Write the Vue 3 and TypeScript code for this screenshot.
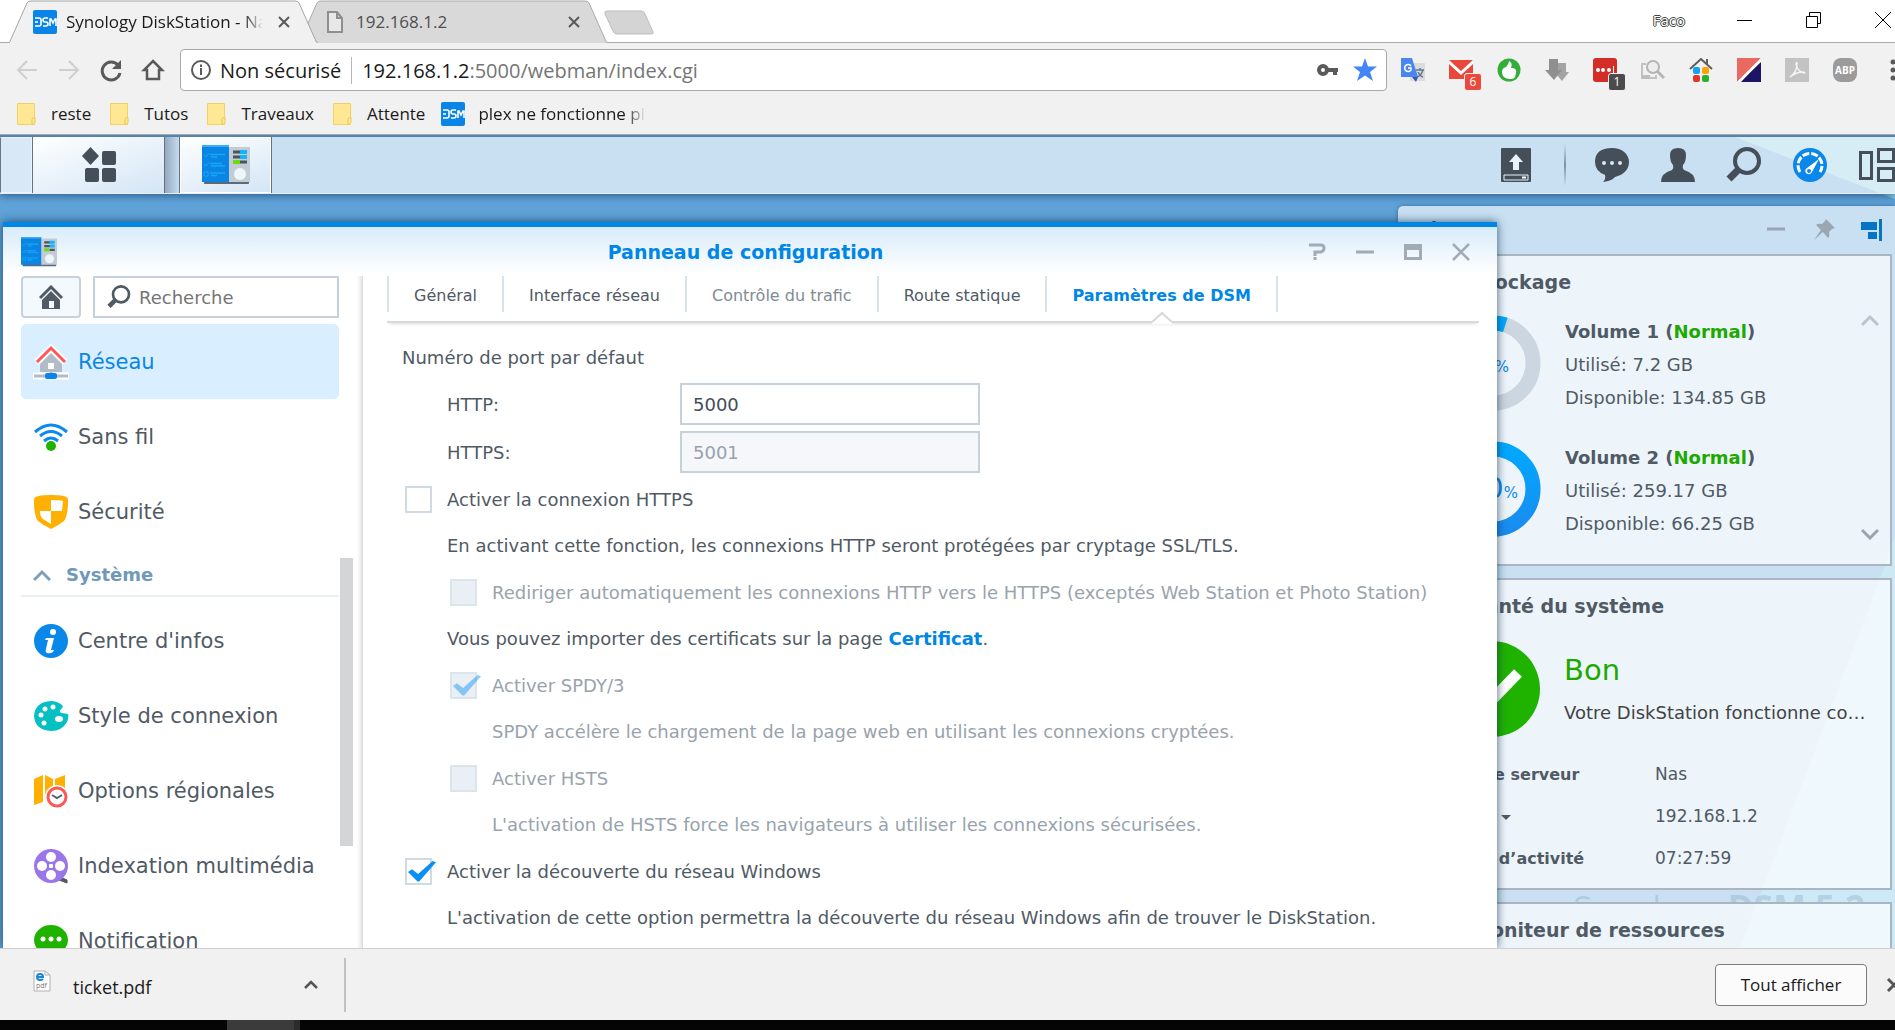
<script setup lang="ts">
import { ref } from 'vue'

interface Volume {
  name: string
  used: string
  free: string
  percent: number
}

const bookmarks = ['reste', 'Tutos', 'Traveaux', 'Attente']
const tabs = [
  { label: 'Général', state: '' },
  { label: 'Interface réseau', state: '' },
  { label: 'Contrôle du trafic', state: 'dim' },
  { label: 'Route statique', state: '' },
  { label: 'Paramètres de DSM', state: 'active' },
]
const volumes: Volume[] = [
  { name: 'Volume 1', used: '7.2 GB', free: '134.85 GB', percent: 5 },
  { name: 'Volume 2', used: '259.17 GB', free: '66.25 GB', percent: 80 },
]
const facts = [
  { label: 'Nom de serveur', value: 'Nas', menu: false },
  { label: 'LAN 1', value: '192.168.1.2', menu: true },
  { label: 'Temps d’activité', value: '07:27:59', menu: false },
]
const networkItems = [
  { id: 'reseau', label: 'Réseau' },
  { id: 'wifi', label: 'Sans fil' },
  { id: 'shield', label: 'Sécurité' },
]
const systemItems = [
  { id: 'info', label: "Centre d'infos" },
  { id: 'palette', label: 'Style de connexion' },
  { id: 'region', label: 'Options régionales' },
  { id: 'media', label: 'Indexation multimédia' },
  { id: 'notif', label: 'Notification' },
]
const httpPort = ref('5000')
const httpsPort = ref('5001')
const address = ref('192.168.1.2:5000/webman/index.cgi')
const enableHttps = ref(false)
const redirect = ref(false)
const spdy = ref(true)
const hsts = ref(false)
const discovery = ref(true)
const ringLength = 2 * Math.PI * 40
</script>

<template>
  <div class="screen">
    <svg class="defs" aria-hidden="true">
      <symbol id="i-panel" viewBox="0 0 48 40">
        <rect x="2" y="36" width="45" height="3" rx="1" fill="#5d6b78" />
        <rect x="26" y="2" width="22" height="35" fill="#c3ccd3" />
        <rect x="0" y="0" width="27" height="37" fill="#0a85e4" />
        <rect x="0" y="0" width="27" height="2" fill="#37aef8" />
        <path d="M2 10l2 2 3-4M2 19l2 2 3-4M2 27h4v4h-4z" fill="none" stroke="#14a8f5" />
        <path d="M8 9.500h15M9 12h6M8 18.500h12M9 21h14M8 28h15M9 30.500h6" stroke="#14a8f5" stroke-width="1.500" />
        <path d="M31 7h8M31 12h8M38 17h7" stroke="#4a5560" stroke-width="3" />
        <path d="M38 7h7M38 12h7" stroke="#12b5f9" stroke-width="4" />
        <path d="M31 17h7" stroke="#6edb12" stroke-width="4" />
        <ellipse cx="38" cy="29" rx="6" ry="6" fill="#edf6fb" />
      </symbol>
      <symbol id="i-dsm" viewBox="0 0 24 24">
        <rect width="24" height="24" rx="2" fill="#0a84e8" />
        <path d="M2 8h4q2 0 2 2v4q0 2-2 2h-4M2 12h3M15 8h-3q-2 0-2 2t2 2h1q2 0 2 2t-2 2h-3M17 16v-7h1l2 4 2-4h1v7" fill="none" stroke="#fff" stroke-width="1.600" />
      </symbol>
      <symbol id="i-folder" viewBox="0 0 24 24">
        <path d="M3.500 1.500h17v21h-17z" fill="#ffe793" stroke="#f2d261" />
        <path d="M18 22.500v-5q0-2 3-2v5q0 2-3 2z" fill="#ffe793" stroke="#ecc94f" />
      </symbol>
      <symbol id="i-reseau" viewBox="0 0 36 36">
        <path d="M18 8l11 10v10H7V18z" fill="#b2bcc7" />
        <rect x="15" y="19" width="6" height="6" fill="#fff" />
        <path d="M4 18L18 4l14 14" fill="none" stroke="#fff" stroke-width="7" />
        <path d="M4 18L18 4l14 14" fill="none" stroke="#ff5757" stroke-width="3" />
        <path d="M0 32h36" stroke="#fff" stroke-width="7" />
        <path d="M18 27v4M1 32h34" stroke="#b2bcc7" stroke-width="3" />
        <rect x="12" y="29" width="12" height="6" rx="2" fill="#0a84e8" />
      </symbol>
      <symbol id="i-wifi" viewBox="0 0 36 36">
        <path d="M2 13q16-14 32 0M7 17q11-9 22 0M11 22q7-6 14 0" fill="none" stroke="#0a8aee" stroke-width="3" />
        <circle cx="18" cy="27" r="5" fill="#1fb300" />
      </symbol>
      <symbol id="i-shield" viewBox="0 0 36 36">
        <path d="M1 5q1-4 17-4t17 4v6q-1 13-4 16-5 4-13 8-8-4-13-8-3-3-4-16z" fill="#ffb000" />
        <path d="M18 6q9 0 12 1l-1 10H18zM18 17H7q0 6 3 8l8 5z" fill="#fff" />
      </symbol>
      <symbol id="i-info" viewBox="0 0 36 36">
        <circle cx="18" cy="18" r="17" fill="#0a88ea" />
        <circle cx="20" cy="9" r="3" fill="#fff" />
        <path d="M13 15h8l-3 12h3l-1 2q-3 2-6 1-2-1-1-4l2-9h-3z" fill="#fff" />
      </symbol>
      <symbol id="i-palette" viewBox="0 0 36 36">
        <path d="M18 3q6 0 11 4 2 2-1 4-3 3 1 4l6 1q1 3-1 8-5 9-16 9Q2 32 1 18 2 4 18 3z" fill="#05c0c2" />
        <g fill="#fff"><circle cx="20" cy="9" r="2.500" /><circle cx="12" cy="11" r="2.500" /><circle cx="8" cy="17" r="2.500" /><circle cx="11" cy="25" r="2.500" /><ellipse cx="26" cy="21" rx="4" ry="3" /></g>
      </symbol>
      <symbol id="i-region" viewBox="0 0 36 36">
        <path d="M1 6l9-4v27l-9 3zM12 2l8 4v22l-8-3zM22 6l10-4v20l-10 3z" fill="#ffb000" />
        <circle cx="24" cy="24" r="12" fill="#fff" />
        <circle cx="24" cy="24" r="9" fill="#fff" stroke="#ff5757" stroke-width="3" />
        <path d="M19 22l5 3 5-3" fill="none" stroke="#56616c" stroke-width="2" />
      </symbol>
      <symbol id="i-media" viewBox="0 0 36 36">
        <path d="M25 28l9 4v3l-8-3z" fill="#505b66" stroke="#505b66" />
        <circle cx="18" cy="18" r="17" fill="#9b76ea" />
        <g fill="#fff"><circle cx="18" cy="9" r="5" /><circle cx="18" cy="27" r="5" /><circle cx="9" cy="18" r="5" /><circle cx="27" cy="18" r="5" /><rect x="16" y="16" width="4" height="4" rx="1" /></g>
      </symbol>
      <symbol id="i-notif" viewBox="0 0 36 36">
        <ellipse cx="18" cy="17" rx="17" ry="15" fill="#1fb300" />
        <path d="M12 28l-2 8 12-6z" fill="#1fb300" />
        <g fill="#fff"><circle cx="10" cy="16" r="2.500" /><circle cx="18" cy="16" r="2.500" /><circle cx="26" cy="16" r="2.500" /></g>
      </symbol>
      <symbol id="i-search" viewBox="0 0 36 36">
        <circle cx="21" cy="14" r="12" fill="none" stroke="currentColor" stroke-width="4" />
        <path d="M12 23l-9 9" stroke="currentColor" stroke-width="7" />
      </symbol>
      <symbol id="i-x" viewBox="0 0 18 18">
        <path d="M4 4l10 10M14 4L4 14" fill="none" stroke="currentColor" stroke-width="2" />
      </symbol>
    </svg>

    <header class="browser">
      <div class="strip">
        <div class="tab tab-on">
          <svg class="tab-shape" viewBox="0 0 310 43" preserveAspectRatio="none"><path d="M0 43Q2 43 3 39L19 3Q20 1 23 1H287Q290 1 291 3L307 39Q308 43 310 43" fill="#f1f1f1" stroke="#a5a5a5" /></svg>
          <svg class="s24"><use href="#i-dsm" /></svg>
          <span class="tab-title fade">Synology DiskStation - Nas</span>
          <button class="plain tab-x" aria-label="Fermer l'onglet"><svg class="s18"><use href="#i-x" /></svg></button>
        </div>
        <div class="tab tab-off">
          <svg class="tab-shape" viewBox="0 0 310 43" preserveAspectRatio="none"><path d="M0 43Q2 43 3 39L19 3Q20 1 23 1H287Q290 1 291 3L307 39Q308 43 310 43" fill="#d9d9d9" stroke="#ababab" /></svg>
          <svg class="s24" viewBox="0 0 24 24"><path d="M5 2h9l5 6v14H5zM14 2v6h5" fill="#e8e8e8" stroke="#8f8f8f" stroke-width="2" /></svg>
          <span class="tab-title">192.168.1.2</span>
          <button class="plain tab-x" aria-label="Fermer l'onglet"><svg class="s18"><use href="#i-x" /></svg></button>
        </div>
        <button class="plain newtab" aria-label="Nouvel onglet"><svg width="52" height="26" viewBox="0 0 52 26"><path d="M4 1h34q3 0 4 3l8 18q1 2-2 2H14q-3 0-4-3L2 4q-1-3 2-3z" fill="#d4d4d4" stroke="#bdbdbd" /></svg></button>
        <div class="win-ctl">
          <span class="user">Faco</span>
          <button class="plain" aria-label="Réduire"><svg class="s18" viewBox="0 0 18 18"><path d="M1 9.500h15" stroke="#000" /></svg></button>
          <button class="plain" aria-label="Restaurer"><svg class="s18" viewBox="0 0 18 18"><path d="M1.500 5.500h11v11h-11zM4.500 5.500v-4h11v11h-3" fill="none" stroke="#000" /></svg></button>
          <button class="plain" aria-label="Fermer"><svg class="s18" viewBox="0 0 18 18"><path d="M1 1l16 16M17 1L1 17" stroke="#000" /></svg></button>
        </div>
      </div>

      <div class="toolbar">
        <nav class="nav">
          <button class="plain" aria-label="Précédent"><svg class="s24" viewBox="0 0 24 24"><path d="M22 12H4M12 3l-9 9 9 9" fill="none" stroke="#cfcfcf" stroke-width="2" /></svg></button>
          <button class="plain" aria-label="Suivant"><svg class="s24" viewBox="0 0 24 24"><path d="M2 12h18M12 3l9 9-9 9" fill="none" stroke="#cfcfcf" stroke-width="2" /></svg></button>
          <button class="plain" aria-label="Actualiser"><svg class="s24" viewBox="0 0 24 24"><path d="M19 7a9 9 0 1 0 2 8" fill="none" stroke="#5a5a5a" stroke-width="3" /><path d="M22 2v9h-9z" fill="#5a5a5a" /></svg></button>
          <button class="plain" aria-label="Accueil"><svg class="s24" viewBox="0 0 24 24"><path d="M12 3l9 9h-3v9H6v-9H3z" fill="none" stroke="#5a5a5a" stroke-width="2.500" /></svg></button>
        </nav>
        <div class="omnibox">
          <svg class="s22" viewBox="0 0 22 22"><circle cx="11" cy="11" r="9" fill="none" stroke="#5a5a5a" stroke-width="2" /><path d="M11 9v7M11 5.500v2.500" stroke="#5a5a5a" stroke-width="2" /></svg>
          <span class="unsafe">Non sécurisé</span>
          <label class="url">
            <span aria-hidden="true"><b>192.168.1.2</b>:5000/webman/index.cgi</span>
            <input v-model="address" class="url-input" aria-label="Adresse" />
          </label>
          <svg class="s24" viewBox="0 0 24 24"><path d="M12 10h10v4h-1v3h-4v-3h-5z" fill="#5a5a5a" /><circle cx="7" cy="12" r="4" fill="none" stroke="#5a5a5a" stroke-width="4" /></svg>
          <svg class="s24" viewBox="0 0 24 24"><path d="M12 0l3 8.500h9l-7 5.500 3 9-8-5.500L4 23l3-9-7-5.500h9z" fill="#4285f4" /></svg>
        </div>
        <div class="exts">
          <button class="plain" aria-label="Traduction"><svg class="s24" viewBox="0 0 24 24"><rect x="9" y="5" width="15" height="18" rx="1" fill="#dcdcdc" /><path d="M11 19h6l-2 5z" fill="#3458b8" /><path d="M0 0h11l6 19H0z" fill="#4a86f0" /><path d="M10 8a3.500 3.500 0 1 0 0 4V10H7" fill="none" stroke="#fff" stroke-width="1.500" /><path d="M15 12h8M19 10v2M22 12q-2 6-6 7M17 14q2 4 5 5" fill="none" stroke="#61788f" stroke-width="1.500" /></svg></button>
          <button class="plain" aria-label="Courrier"><svg class="s24" viewBox="0 0 24 24"><path d="M0 2h24v19H0z" fill="#e8483b" /><path d="M0 2l12 11L24 2v4L12 17 0 6z" fill="#fff" /><path d="M3 2h18l-9 8z" fill="#e8483b" /></svg><span class="badge red">6</span></button>
          <button class="plain" aria-label="Avis"><svg class="s24" viewBox="0 0 24 24"><circle cx="12" cy="12" r="11.500" fill="#35ad3a" /><path d="M12 3q4 2 2 7h2q4 1 3 5l-1 4q-1 2-5 2-8 0-8-7 0-4 4-5 3-3 3-6z" fill="#fff" /></svg></button>
          <button class="plain" aria-label="Téléchargement"><svg class="s24" viewBox="0 0 24 24"><path d="M12 5h9v9h3l-7 9-6-7z" fill="#a3a3a3" /><path d="M4 1h9v11h4l-8 10-9-10h4z" fill="#8f8f8f" /></svg></button>
          <button class="plain" aria-label="Mots de passe"><svg class="s24" viewBox="0 0 24 24"><rect width="24" height="24" rx="3" fill="#d32d27" /><circle cx="5" cy="12" r="2" fill="#fff" /><circle cx="10" cy="12" r="2" fill="#fff" /><circle cx="16" cy="12" r="2" fill="#fff" /><path d="M20.500 8v8" stroke="#fff" /></svg><span class="badge dark">1</span></button>
          <button class="plain" aria-label="Recherche image"><svg class="s24" viewBox="0 0 24 24"><path d="M5 6H1v14h14v-3" fill="none" stroke="#c2c2c2" stroke-width="2" /><path d="M1 17h8v4H1z" fill="#bdbdbd" /><circle cx="12" cy="9" r="6" fill="#eee" stroke="#b5b5b5" stroke-width="2" /><path d="M16 13l7 7" stroke="#b5b5b5" stroke-width="3" /></svg></button>
          <button class="plain" aria-label="Maison"><svg class="s24" viewBox="0 0 24 24"><path d="M1 11L12 1l11 10M18 1v6" fill="none" stroke="#5e5e5e" stroke-width="2" /><rect x="4" y="9" width="7" height="7" rx="2" fill="#12a4f0" /><rect x="13" y="9" width="7" height="7" rx="2" fill="#ffa200" /><rect x="4" y="17" width="7" height="7" rx="2" fill="#e43529" /><rect x="13" y="17" width="7" height="7" rx="2" fill="#28b22d" /></svg></button>
          <button class="plain" aria-label="Extension"><svg class="s24" viewBox="0 0 24 24"><path d="M0 0h24L0 24z" fill="#e86a61" /><path d="M24 3v21H4z" fill="#1c1564" /><path d="M24 0v4L3 24H0z" fill="#fff" /></svg></button>
          <button class="plain" aria-label="PDF"><svg class="s24" viewBox="0 0 24 24"><rect width="24" height="24" fill="#c3c3c3" /><path d="M5 19q7-5 7-13 0-3-1 0 1 7 8 9 2 0-1-1-7 0-13 5" fill="none" stroke="#f5f5f5" stroke-width="1.500" /></svg></button>
          <button class="plain abp" aria-label="Bloqueur de publicité">ABP</button>
          <button class="plain" aria-label="Menu"><svg class="s24" viewBox="0 0 24 24"><g fill="#5a5a5a"><circle cx="12" cy="4" r="2.500" /><circle cx="12" cy="12" r="2.500" /><circle cx="12" cy="20" r="2.500" /></g></svg></button>
        </div>
      </div>

      <nav class="bookmarks">
        <a v-for="b in bookmarks" :key="b" href="#"><svg class="s24"><use href="#i-folder" /></svg>{{ b }}</a>
        <a href="#"><svg class="s24"><use href="#i-dsm" /></svg><span class="fade bm-long">plex ne fonctionne plus</span></a>
      </nav>
    </header>

    <main class="desktop">
      <svg class="wall" viewBox="0 0 1895 812" preserveAspectRatio="none" aria-hidden="true">
        <path d="M1730 0H1895V64z" fill="#aff0ee" fill-opacity=".5" />
        <path d="M1885 430L1895 400V812H1740z" fill="#7fe0f0" fill-opacity=".45" />
      </svg>

      <div class="taskbar">
        <div class="tb-edge"></div>
        <button class="tb-menu" aria-label="Menu principal"><svg width="36" height="36" viewBox="0 0 36 36"><g fill="#454f5a"><path d="M9.500 0l8.500 9-8.500 9L1 9z" /><rect x="21" y="4" width="14" height="14" rx="2" /><rect x="4" y="21" width="14" height="14" rx="2" /><rect x="21" y="21" width="14" height="14" rx="2" /></g></svg></button>
        <div class="tb-gap"></div>
        <button class="tb-app" aria-label="Panneau de configuration"><svg width="48" height="40"><use href="#i-panel" /></svg></button>
        <div class="tray">
          <button class="plain" aria-label="Envoi"><svg class="s36" viewBox="0 0 36 36"><rect x="3" y="1" width="30" height="34" rx="1" fill="#454f5a" /><path d="M18 7l7 8h-4v8h-6v-8h-4z" fill="#e9f2fa" /><path d="M6 28h24v5H6z" fill="none" stroke="#e9f2fa" /><path d="M24 30.500h4" stroke="#fff" stroke-width="2" /></svg></button>
          <span class="tray-sep"></span>
          <button class="plain" aria-label="Notifications"><svg class="s36" viewBox="0 0 36 36"><path d="M18 1c10 0 17 6 17 14S29 28 21 30q-3 4-12 5 3-3 2-7Q1 24 1 15 1 1 18 1z" fill="#454f5a" /><g fill="#dbe8f4"><circle cx="10" cy="16" r="2" /><circle cx="18" cy="16" r="2" /><circle cx="26" cy="16" r="2" /></g></svg></button>
          <button class="plain" aria-label="Utilisateur"><svg class="s36" viewBox="0 0 36 36"><path d="M18 1q8 0 8 7 0 7-3 10-1 3 1 5 11 3 11 12H1q0-9 11-12 2-2 1-5-3-3-3-10 0-7 8-7z" fill="#454f5a" /></svg></button>
          <button class="plain" aria-label="Rechercher"><svg class="s36"><use href="#i-search" /></svg></button>
          <button class="plain" aria-label="Widgets"><svg class="s36" viewBox="0 0 36 36"><circle cx="18" cy="18" r="17" fill="#0a88ea" /><path d="M8 25a12 12 0 1 1 20 0" fill="none" stroke="#fff" stroke-width="3" stroke-dasharray="7 2" /><path d="M27 12l-7 13q-2 4-6 1-2-3 1-5z" fill="#fff" /><circle cx="17" cy="24" r="2" fill="#0a88ea" /></svg></button>
          <button class="plain" aria-label="Vue d'ensemble"><svg width="37" height="36" viewBox="0 0 37 36"><g fill="none" stroke="#454f5a" stroke-width="3"><path d="M2.500 5.500h11v26h-11zM20.500 2.500h15v12h-15zM20.500 21.500h15v12h-15z" /></g></svg></button>
        </div>
      </div>

      <aside class="widgets">
        <div class="wd-head">
          <button class="plain wd-plus" aria-label="Ajouter"><svg class="s24" viewBox="0 0 24 24"><path d="M12 3v18M3 12h18" stroke="#454f5a" stroke-width="3" /></svg></button>
          <button class="plain" aria-label="Réduire"><svg class="s24" viewBox="0 0 24 24"><path d="M3 11h18" stroke="#9aa7b3" stroke-width="3" /></svg></button>
          <button class="plain" aria-label="Épingler"><svg class="s24" viewBox="0 0 24 24"><path d="M14 1l9 9-3 1-3 3q1 4-1 6l-5-6-9 8 7-10-5-5q2-2 6-1l3-3z" fill="#9aa7b3" /></svg></button>
          <button class="plain" aria-label="Ancrer"><svg class="s24" viewBox="0 0 24 24"><path d="M1 4h16v8H1zM8 14h9v7H8zM19 1h3v22h-3z" fill="#0673c4" /></svg></button>
        </div>
        <div class="brand" aria-hidden="true">Synology <b>DSM 5.2</b></div>
        <section class="card">
          <h2>Stockage</h2>
          <div class="storage">
            <div class="vols">
              <div v-for="v in volumes" :key="v.name" class="vol">
                <div class="ring">
                  <svg width="96" height="96" viewBox="0 0 96 96">
                    <defs><linearGradient id="ringfill" x1="1" y1="0" x2="0" y2="0"><stop offset="0" stop-color="#00a8ff" /><stop offset="1" stop-color="#1a8cf0" /></linearGradient></defs>
                    <circle cx="48" cy="48" r="40" fill="none" stroke="#ccd6e0" stroke-width="15" />
                    <circle cx="48" cy="48" r="40" fill="none" :stroke="v.percent < 10 ? '#00a8ff' : 'url(#ringfill)'" stroke-width="15" transform="rotate(-90 48 48)" :stroke-dasharray="`${(ringLength * v.percent) / 100} ${ringLength}`" />
                  </svg>
                  <span class="pct">{{ v.percent }}<small>%</small></span>
                </div>
                <div class="lines">
                  <strong>{{ v.name }} (<em>Normal</em>)</strong>
                  <span>Utilisé: {{ v.used }}</span>
                  <span>Disponible: {{ v.free }}</span>
                </div>
              </div>
            </div>
            <div class="arrows">
              <button class="plain" aria-label="Précédent"><svg width="18" height="12" viewBox="0 0 18 12"><path d="M1 10l8-8 8 8" fill="none" stroke="#bcc5cd" stroke-width="3" /></svg></button>
              <button class="plain" aria-label="Suivant"><svg width="18" height="12" viewBox="0 0 18 12"><path d="M1 2l8 8 8-8" fill="none" stroke="#9aa5af" stroke-width="3" /></svg></button>
            </div>
          </div>
        </section>
        <section class="card">
          <h2>Santé du système</h2>
          <div class="health">
            <svg width="96" height="96" viewBox="0 0 96 96"><circle cx="48" cy="48" r="48" fill="#1fb300" /><path d="M22 48l19 18 33-34" fill="none" stroke="#fff" stroke-width="11" /></svg>
            <div class="lines">
              <span class="good">Bon</span>
              <span class="works">Votre DiskStation fonctionne correctement.</span>
            </div>
          </div>
          <table class="facts">
            <tbody>
              <tr v-for="f in facts" :key="f.label">
                <th scope="row">{{ f.label }}<svg v-if="f.menu" class="caret" width="10" height="5" viewBox="0 0 10 5"><path d="M0 0h10L5 5z" fill="#505a65" /></svg></th>
                <td>{{ f.value }}</td>
              </tr>
            </tbody>
          </table>
        </section>
        <section class="card last">
          <h2>Moniteur de ressources</h2>
        </section>
      </aside>

      <section class="window">
        <header class="titlebar">
          <svg width="36" height="30"><use href="#i-panel" /></svg>
          <h1>Panneau de configuration</h1>
          <div class="w-ctl">
            <button class="plain" aria-label="Aide"><svg class="s18" viewBox="0 0 18 18"><path d="M1 2h12q3 0 3 3t-3 4H7v4M7 14v3" fill="none" stroke="#a0abb5" stroke-width="3" /></svg></button>
            <button class="plain" aria-label="Réduire"><svg class="s18" viewBox="0 0 18 18"><path d="M0 9h18" stroke="#a0abb5" stroke-width="3" /></svg></button>
            <button class="plain" aria-label="Agrandir"><svg class="s18" viewBox="0 0 18 18"><path d="M0 1h18v16H0zM3 7v7h12V7z" fill="#a0abb5" fill-rule="evenodd" /></svg></button>
            <button class="plain" aria-label="Fermer"><svg class="s18" viewBox="0 0 18 18"><path d="M1 1l16 16M17 1L1 17" stroke="#a0abb5" stroke-width="2.500" /></svg></button>
          </div>
        </header>

        <div class="w-body">
          <aside class="side">
            <div class="side-top">
              <button class="home" aria-label="Accueil"><svg class="s24" viewBox="0 0 24 24"><path d="M1 13L12 2l11 11" fill="none" stroke="#505b66" stroke-width="3" /><path d="M12 6l9 9v9H3v-9zM10 16v7h5v-7z" fill="#505b66" fill-rule="evenodd" /></svg></button>
              <label class="search"><svg class="s24"><use href="#i-search" /></svg><input type="text" placeholder="Recherche" aria-label="Recherche" /></label>
            </div>
            <div class="side-list">
              <nav class="items">
                <a v-for="(it, i) in networkItems" :key="it.id" href="#" class="item" :class="{ on: i === 0 }"><svg class="s36"><use :href="'#i-' + it.id" /></svg>{{ it.label }}</a>
                <button class="group"><svg width="18" height="12" viewBox="0 0 18 12"><path d="M1 11l8-8 8 8" fill="none" stroke="#7e9fba" stroke-width="3" /></svg>Système</button>
                <a v-for="it in systemItems" :key="it.id" href="#" class="item"><svg class="s36"><use :href="'#i-' + it.id" /></svg>{{ it.label }}</a>
              </nav>
              <div class="thumb"></div>
            </div>
          </aside>

          <div class="content">
            <nav class="ptabs">
              <a v-for="t in tabs" :key="t.label" href="#" :class="t.state">{{ t.label }}<svg v-if="t.state === 'active'" class="notch" width="20" height="13" viewBox="0 0 20 13"><path d="M0 13V11L10 1l10 10v2z" fill="#fff" /><path d="M0 11L10 2l10 9" fill="none" stroke="#d6d6d6" stroke-width="2" /></svg></a>
            </nav>

            <form class="form" @submit.prevent>
              <p class="legend">Numéro de port par défaut</p>
              <div class="field"><label for="http">HTTP:</label><input id="http" v-model="httpPort" type="text" /></div>
              <div class="field"><label for="https">HTTPS:</label><input id="https" v-model="httpsPort" type="text" disabled /></div>
              <div class="rows">
                <label class="row"><input v-model="enableHttps" type="checkbox" />Activer la connexion HTTPS</label>
                <p class="row in1">En activant cette fonction, les connexions HTTP seront protégées par cryptage SSL/TLS.</p>
                <label class="row off sub"><input v-model="redirect" type="checkbox" disabled />Rediriger automatiquement les connexions HTTP vers le HTTPS (exceptés Web Station et Photo Station)</label>
                <p class="row in1"><span>Vous pouvez importer des certificats sur la page <a href="#">Certificat</a>.</span></p>
                <label class="row off sub"><input v-model="spdy" type="checkbox" disabled />Activer SPDY/3</label>
                <p class="row off in2">SPDY accélère le chargement de la page web en utilisant les connexions cryptées.</p>
                <label class="row off sub"><input v-model="hsts" type="checkbox" disabled />Activer HSTS</label>
                <p class="row off in2">L'activation de HSTS force les navigateurs à utiliser les connexions sécurisées.</p>
                <label class="row"><input v-model="discovery" type="checkbox" />Activer la découverte du réseau Windows</label>
                <p class="row in1">L'activation de cette option permettra la découverte du réseau Windows afin de trouver le DiskStation.</p>
              </div>
            </form>
          </div>
        </div>
      </section>
    </main>

    <footer class="downloads">
      <button class="plain dl-file"><svg width="18" height="22" viewBox="0 0 18 22"><path d="M1 1h11l5 4v16H1z" fill="#fff" stroke="#b0b0b0" /><path d="M12 1v4h5" fill="none" stroke="#b0b0b0" /><path d="M4 7h6q0-3-3-3T4 7q0 3 3 3 2 0 3-1" fill="none" stroke="#1c83d8" stroke-width="2" /><text x="3" y="18" font-size="7" fill="#777">pdf</text></svg><span>ticket.pdf</span></button>
      <button class="plain dl-more" aria-label="Options"><svg width="14" height="9" viewBox="0 0 14 9"><path d="M1 8l6-6 6 6" fill="none" stroke="#555" stroke-width="2.500" /></svg></button>
      <button class="all">Tout afficher</button>
      <button class="plain dl-close" aria-label="Fermer"><svg class="s18" viewBox="0 0 18 18"><path d="M3 3l12 12M15 3L3 15" stroke="#555" stroke-width="3" /></svg></button>
    </footer>
    <div class="os-bar"><span></span></div>
  </div>
</template>

<style>
body {
  margin: 0;
  overflow: hidden;
}
</style>

<style scoped>
* {
  box-sizing: border-box;
}
.screen {
  display: flex;
  flex-direction: column;
  height: 100vh;
  overflow: hidden;
  font-family: 'DejaVu Sans', Verdana, sans-serif;
  font-size: 18px;
  color: #505a65;
}
.defs {
  position: absolute;
  width: 0;
  height: 0;
}
svg {
  display: block;
  flex: none;
}
.s18 {
  width: 18px;
  height: 18px;
}
.s22 {
  width: 22px;
  height: 22px;
}
.s24 {
  width: 24px;
  height: 24px;
}
.s36 {
  width: 36px;
  height: 36px;
}
a {
  color: inherit;
  text-decoration: none;
}
button {
  font: inherit;
  color: inherit;
}
.plain {
  border: 0;
  padding: 0;
  background: none;
  flex: none;
}

/* Browser chrome */
.browser,
.downloads {
  font-family: 'Open Sans', 'Segoe UI', sans-serif;
  color: #1a1a1a;
}
.browser {
  flex: none;
  background: #f1f1f1;
  border-bottom: 1px solid #a8a8a8;
}
.strip {
  display: flex;
  height: 43px;
  padding-left: 8px;
  background: #fff;
  box-shadow: inset 0 -1px #ababab;
}
.tab {
  position: relative;
  display: flex;
  align-items: center;
  width: 310px;
  padding: 0 25px;
  font-size: 17px;
}
.tab > * {
  position: relative;
}
.tab .tab-shape {
  position: absolute;
  left: 0;
  top: 0;
  width: 100%;
  height: 100%;
}
.tab-on {
  z-index: 1;
}
.tab-off {
  margin-left: -20px;
  color: #4f4f4f;
}
.tab-title {
  flex: 1;
  margin: 0 12px 0 9px;
  overflow: hidden;
  white-space: nowrap;
}
.fade {
  overflow: hidden;
  white-space: nowrap;
  mask-image: linear-gradient(to left, transparent, #000 20px);
}
.tab-x {
  color: #5a5a5a;
}
.newtab {
  margin: 10px 0 0 -5px;
  align-self: flex-start;
}
.win-ctl {
  margin-left: auto;
  display: flex;
  align-items: center;
  padding: 0 3px 3px 0;
  gap: 51px;
}
.user {
  font-size: 15px;
  color: #fff;
  text-shadow: 1px 0 #444, -1px 0 #444, 0 1px #444, 0 -1px #444;
}
.toolbar {
  display: flex;
  align-items: center;
  height: 54px;
  padding-left: 15px;
}
.nav {
  display: flex;
  gap: 18px;
}
.omnibox {
  flex: 1;
  display: flex;
  align-items: center;
  height: 42px;
  margin: 0 14px 0 15px;
  padding: 0 9px;
  border: 1px solid #a9a9a9;
  border-radius: 4px;
  background: #fff;
  font-size: 20px;
}
.unsafe {
  margin-left: 8px;
  padding-right: 10px;
}
.url {
  flex: 1;
  position: relative;
  padding-left: 11px;
  color: #757575;
  box-shadow: inset 1px 0 #b5b5b5;
}
.url b {
  font-weight: 400;
  color: #1a1a1a;
}
.url-input {
  position: absolute;
  left: 0;
  top: 0;
  width: 100%;
  height: 100%;
  padding: 0 0 0 11px;
  border: 0;
  background: none;
  font: inherit;
  color: transparent;
}
.omnibox .s24 + .s24 {
  margin-left: 13px;
}
.exts {
  display: flex;
  gap: 24px;
  margin-right: -10px;
}
.exts .plain {
  position: relative;
}
.badge {
  position: absolute;
  left: 15px;
  top: 15px;
  width: 18px;
  height: 18px;
  border: 1px solid #f1f1f1;
  border-radius: 3px;
  font-size: 12px;
  line-height: 16px;
  color: #fff;
}
.red {
  background: #ea4a3d;
}
.dark {
  background: #4b4b4b;
}
.exts .abp {
  width: 24px;
  height: 24px;
  border-radius: 8px;
  background: #9b9b9b;
  color: #fff;
  font-size: 10px;
  font-weight: 700;
}
.bookmarks {
  display: flex;
  align-items: center;
  gap: 16px;
  height: 37px;
  padding: 0 0 4px 14px;
  font-size: 17px;
}
.bookmarks a {
  display: flex;
  align-items: center;
  gap: 13px;
}
.bm-long {
  width: 168px;
}

/* Desktop */
.desktop {
  position: relative;
  flex: 1;
  overflow: hidden;
  background: #5fa3d9;
}
.wall {
  position: absolute;
  width: 100%;
  height: 100%;
}
.taskbar {
  position: relative;
  display: flex;
  height: 59px;
  border-top: 2px solid #4f83b0;
  border-bottom: 1px solid #e6f0fa;
  background: rgba(255, 255, 255, 0.66);
  box-shadow: 0 2px 8px rgba(20, 50, 90, 0.6);
}
.tb-edge {
  width: 32px;
  border: 1px solid #eaf3fb;
  border-left: 1px solid #6a7683;
  background: #d8e8f6;
}
.tb-menu,
.tb-app {
  display: flex;
  align-items: center;
  justify-content: center;
  padding: 0;
  border: 1px solid #66727e;
  border-width: 0 1px;
  background: linear-gradient(160deg, #fff, #d3e5f5);
}
.tb-menu {
  width: 133px;
}
.tb-gap {
  width: 14px;
  background: linear-gradient(to right, #94a9bd, #c5dcf1);
}
.tb-app {
  width: 93px;
  box-shadow: inset 0 0 0 1px #fff;
}
.tray {
  display: flex;
  align-items: center;
  margin-left: auto;
  gap: 30px;
  color: #454f5a;
}
.tray-sep {
  width: 2px;
  height: 42px;
  margin-right: -2px;
  background: linear-gradient(transparent, #7f8f9f, transparent);
}

/* Widget panel */
.widgets {
  position: absolute;
  right: 0;
  top: 71px;
  width: 497px;
  padding: 0 3px 0 4px;
  border-radius: 5px 0 0 0;
  background: rgba(255, 255, 255, 0.66);
  box-shadow: 0 0 4px rgba(20, 50, 90, 0.5);
}
.wd-head {
  display: flex;
  align-items: center;
  justify-content: flex-end;
  gap: 24px;
  height: 48px;
  padding-right: 8px;
}
.wd-plus {
  margin: 0 auto 0 20px;
}
.brand {
  position: absolute;
  right: 30px;
  top: 684px;
  height: 12px;
  overflow: hidden;
  font-family: 'Open Sans', sans-serif;
  font-size: 35px;
  line-height: 35px;
  color: rgba(110, 140, 170, 0.25);
}
.card {
  position: relative;
  height: 312px;
  margin-bottom: 12px;
  padding: 14px 11px 0 32px;
  border: 2px solid #aab6c3;
  background: rgba(255, 255, 255, 0.68);
}
.card h2 {
  margin: 0;
  padding-left: 36px;
  font-size: 19px;
  line-height: 24px;
}
.last {
  margin-bottom: 0;
}
.storage {
  display: flex;
  justify-content: space-between;
  margin-top: 21px;
}
.vols {
  display: flex;
  flex-direction: column;
  gap: 27px;
  padding-left: 9px;
}
.vol,
.health {
  display: flex;
  gap: 24px;
}
.ring {
  position: relative;
  width: 96px;
  height: 96px;
}
.pct {
  position: absolute;
  left: 0;
  top: 0;
  width: 100%;
  text-align: center;
  font-size: 28px;
  line-height: 96px;
  color: #0a88ea;
}
.pct small {
  font-size: 15px;
}
.lines {
  display: flex;
  flex-direction: column;
  line-height: 33px;
  white-space: nowrap;
}
.lines em {
  font-style: normal;
  color: #1ea900;
}
.arrows {
  display: flex;
  flex-direction: column;
  justify-content: space-between;
}
.health {
  margin-top: 23px;
  padding-left: 8px;
}
.health .lines {
  flex: 1;
  min-width: 0;
  padding: 7px 12px 0 0;
}
.good {
  font-size: 29px;
  line-height: 44px;
  color: #1ea900;
}
.works {
  overflow: hidden;
  text-overflow: ellipsis;
  line-height: 42px;
  color: #434343;
}
.facts {
  width: 100%;
  margin-top: 16px;
  border-collapse: collapse;
}
.facts tr {
  height: 42px;
}
.facts th,
.facts td {
  padding: 0;
  font-size: 16px;
  text-align: left;
}
.facts th {
  width: 219px;
}
.facts td {
  font-size: 17px;
}
.caret {
  display: inline-block;
  margin-left: 12px;
  vertical-align: middle;
}

/* Control panel window */
.window {
  position: absolute;
  left: 3px;
  right: 398px;
  top: 87px;
  bottom: 0;
  display: flex;
  flex-direction: column;
  border-top: 5px solid #0086e5;
  background: #fff;
  box-shadow: 0 0 9px rgba(10, 40, 70, 0.75);
}
.titlebar {
  display: grid;
  grid-template-columns: 1fr auto 1fr;
  align-items: center;
  flex: none;
  height: 49px;
  padding: 0 27px 0 18px;
  background: linear-gradient(#d8ebfa, #fff 46px);
}
.titlebar h1 {
  margin: 0;
  font-size: 19px;
  color: #0086e5;
}
.w-ctl {
  display: flex;
  justify-content: flex-end;
  gap: 30px;
}
.w-body {
  display: flex;
  flex: 1;
  min-height: 0;
}
.side {
  display: flex;
  flex-direction: column;
  flex: none;
  width: 360px;
  padding-left: 18px;
  border-right: 1px solid #dcdcdc;
  box-shadow: inset -5px 0 5px -4px #d4d4d4;
}
.side-top {
  display: flex;
  flex: none;
  gap: 12px;
  width: 318px;
  height: 42px;
}
.home {
  display: flex;
  align-items: center;
  justify-content: center;
  width: 60px;
  border: 2px solid #c6d1dc;
  border-radius: 4px;
  background: #f4f9fd;
}
.search {
  display: flex;
  align-items: center;
  flex: 1;
  gap: 8px;
  padding-left: 12px;
  border: 2px solid #c6d1dc;
}
.search input {
  width: 180px;
  padding: 0;
  border: 0;
  outline: 0;
  font: inherit;
  color: #505a65;
}
.search input::placeholder {
  color: #757575;
}
.side-list {
  display: flex;
  flex: 1;
  min-height: 0;
  margin-top: 6px;
  gap: 1px;
  overflow: hidden;
}
.items {
  width: 318px;
}
.item {
  display: flex;
  align-items: center;
  gap: 9px;
  height: 75px;
  padding-left: 12px;
  border-radius: 5px;
  font-size: 21px;
}
.on {
  background: #d9eeff;
  color: #0a86e6;
}
.group {
  display: flex;
  align-items: center;
  gap: 15px;
  width: 100%;
  height: 48px;
  margin-bottom: 6px;
  padding: 5px 0 0 12px;
  border: 0;
  border-bottom: 2px solid #e9eff3;
  background: none;
  font-weight: 700;
  color: #6f99b8;
}
.thumb {
  width: 13px;
  height: 288px;
  margin-top: 234px;
  background: #d3d5d7;
}
.content {
  flex: 1;
  min-width: 0;
  padding: 0 18px 0 24px;
}
.ptabs {
  display: flex;
  height: 47px;
  border-bottom: 2px solid #dadada;
  box-shadow: 0 3px 3px -2px #ddd;
  font-size: 16px;
  line-height: 40px;
}
.ptabs a {
  position: relative;
  height: 36px;
  padding: 0 25px;
  border-left: 2px solid #d7e2ee;
}
.ptabs a:last-child {
  border-right: 2px solid #d7e2ee;
}
.ptabs .dim {
  color: #828a93;
}
.ptabs .active {
  font-weight: 700;
  color: #0086e5;
}
.notch {
  position: absolute;
  left: calc(50% - 10px);
  bottom: -12px;
}
.form {
  padding-left: 15px;
}
.form p {
  margin: 0;
}
.legend {
  padding-top: 23px;
  line-height: 24px;
}
.legend + .field {
  margin-top: 13px;
}
.field {
  display: flex;
  align-items: center;
  margin-bottom: 6px;
  padding-left: 45px;
}
.field label {
  width: 233px;
}
.field input {
  width: 300px;
  height: 42px;
  padding: 0 0 0 11px;
  border: 2px solid #c6d1dc;
  background: #fff;
  font: inherit;
  color: #434d57;
}
.field input:disabled {
  background: #f5f7fa;
  color: #97a2ad;
}
.rows {
  margin-top: -3px;
}
.row {
  display: flex;
  align-items: center;
  height: 47px;
  white-space: nowrap;
}
label.row {
  height: 46px;
}
.row input {
  position: relative;
  appearance: none;
  width: 27px;
  height: 27px;
  margin: 0 15px 0 3px;
  border: 2px solid #d0dae4;
  background: #fff;
}
.row input:disabled {
  background: #e9eff4;
  border-color: #dbe5ee;
}
.row input:checked::after {
  content: '';
  position: absolute;
  left: 1px;
  top: 1px;
  width: 28px;
  height: 21px;
  background: #0a90f5;
  clip-path: polygon(0 55%, 14% 42%, 36% 64%, 88% 2%, 100% 8%, 40% 100%, 34% 100%);
}
.row input:disabled:checked::after {
  opacity: 0.45;
}
.sub,
.in1 {
  padding-left: 45px;
}
.in2 {
  padding-left: 90px;
}
.off {
  color: #98a3ad;
}
.row a {
  font-weight: 700;
  color: #0086e5;
}

/* Download shelf */
.downloads {
  position: relative;
  display: flex;
  align-items: center;
  flex: none;
  height: 72px;
  overflow: hidden;
  border-top: 1px solid #cfcfcf;
  background: #f1f1f1;
}
.dl-file {
  display: flex;
  gap: 22px;
  width: 304px;
  padding-left: 33px;
  font-size: 18px;
}
.dl-file span {
  padding-top: 5px;
}
.dl-more {
  display: flex;
  align-items: center;
  width: 42px;
  height: 54px;
  border-right: 2px solid #c2c2c2;
}
.all {
  width: 152px;
  height: 42px;
  margin-left: auto;
  border: 1px solid #7c7c7c;
  border-radius: 4px;
  background: #fbfbfb;
  font-size: 17px;
  line-height: 36px;
  color: #1a1a1a;
}
.dl-close {
  margin: 0 -8px 0 18px;
}
.os-bar {
  flex: none;
  height: 10px;
  padding-left: 227px;
  background: #050506;
}
.os-bar span {
  display: block;
  width: 73px;
  height: 10px;
  border-right: 6px solid #2c2c2c;
  background: #3b3b3b;
}
</style>
